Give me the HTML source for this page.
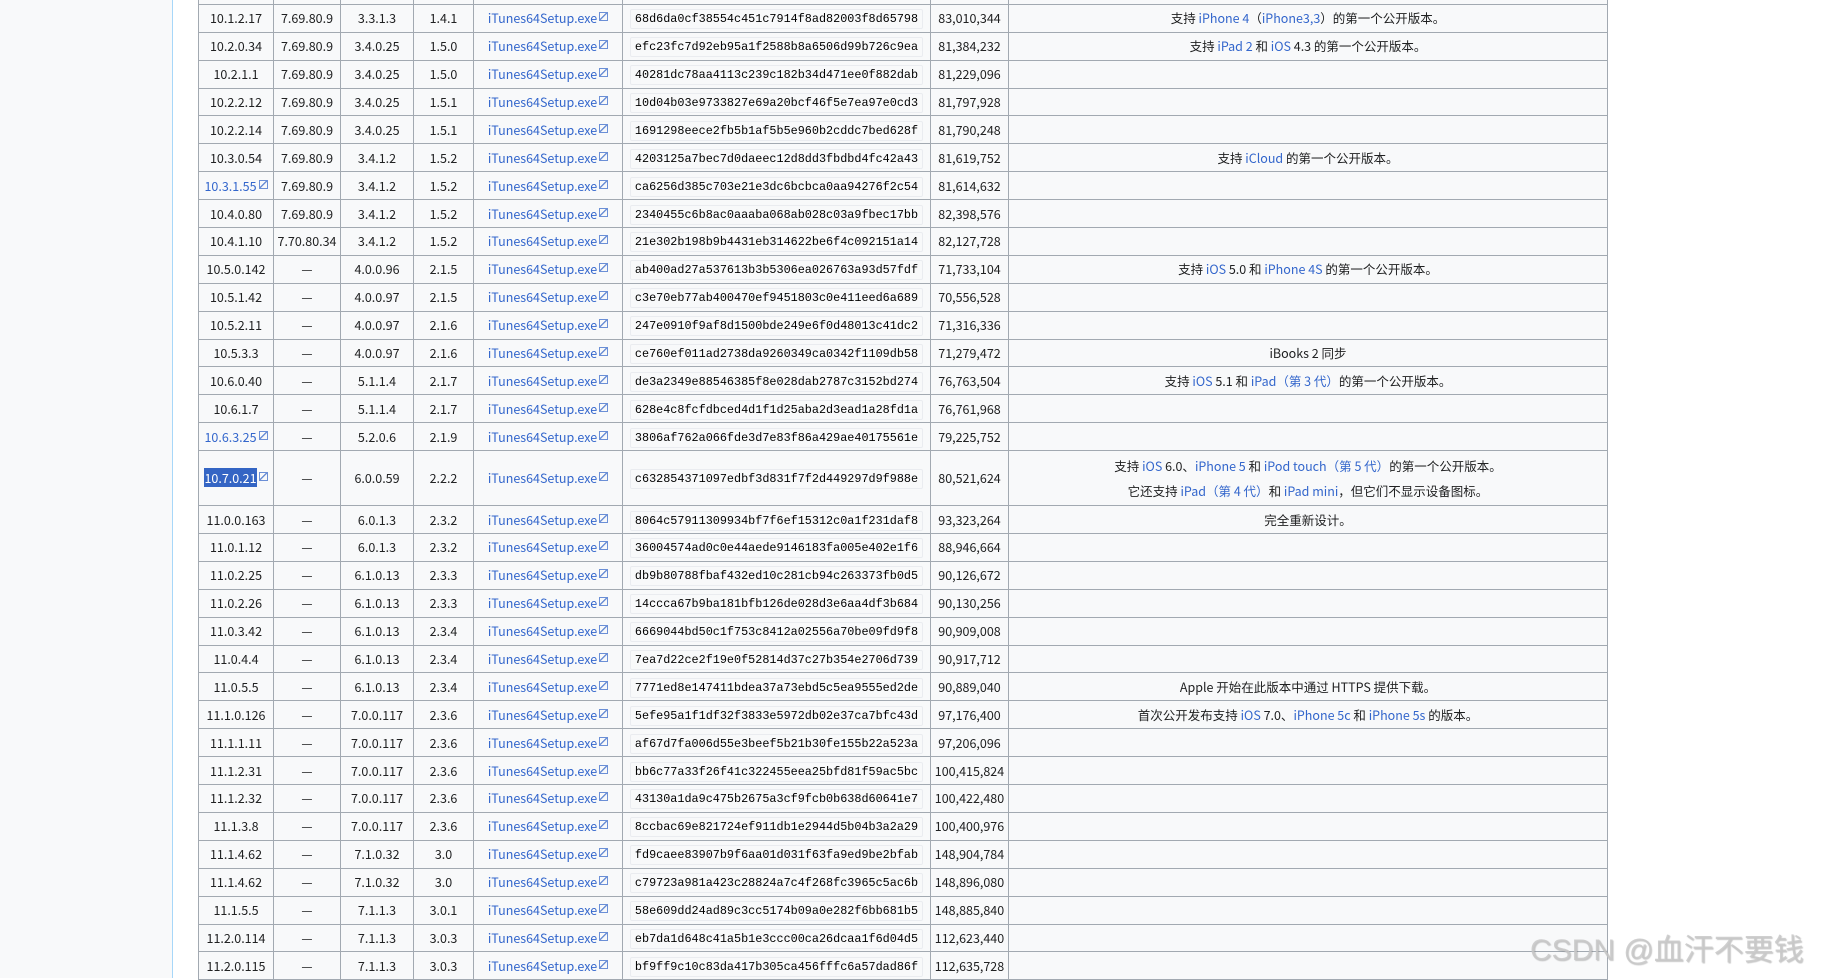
<!DOCTYPE html>
<html><head><meta charset="utf-8"><style>
html,body{margin:0;padding:0;width:1845px;height:978px;overflow:hidden;background:#fff}
#side{position:absolute;left:0;top:0;width:172px;height:978px;background:#f8f9fa;border-right:1px solid #a7d7f9}
table{position:absolute;left:198px;top:-24px;border-collapse:collapse;table-layout:fixed;width:1409px;background:#f8f9fa;font-family:"Noto Sans CJK SC","Liberation Sans",sans-serif;font-size:12.5px;color:#202122}
td{border:1px solid #a2a9b1;height:26.9px;padding:0 2px;text-align:center;white-space:nowrap;overflow:hidden;line-height:16px}
a{color:#3366cc;text-decoration:none}
.e::after{content:"";display:inline-block;width:7px;height:7px;border:1px solid #6b8fd6;margin-left:2px;vertical-align:2px;background:linear-gradient(135deg,transparent 42%,#6b8fd6 42%,#6b8fd6 56%,transparent 56%)}
code{font-family:"Liberation Mono",monospace;font-size:11.8px;background:#f8f9fa;border:1px solid #eaecf0;border-radius:2px;padding:2px 4px;color:#000}
.hl{background:#3465c4;color:#fff}
.tall td{height:54px}
.tall p{margin:0;line-height:25px}
#wm{position:absolute;left:1530px;top:925px;font-family:"Liberation Sans","Noto Sans CJK SC",sans-serif;font-size:30px;color:rgba(200,200,200,.85);text-shadow:1px 1px 1px rgba(120,120,120,.4);white-space:nowrap}
</style></head><body>
<div id="side"></div>
<table>
<colgroup><col style="width:75px"><col style="width:67px"><col style="width:73px"><col style="width:60px"><col style="width:149px"><col style="width:308px"><col style="width:78px"><col style="width:599px"></colgroup>
<tr><td></td><td></td><td></td><td></td><td></td><td></td><td></td><td></td></tr>
<tr><td>10.1.2.17</td><td>7.69.80.9</td><td>3.3.1.3</td><td>1.4.1</td><td><a class="e">iTunes64Setup.exe</a></td><td><code>68d6da0cf38554c451c7914f8ad82003f8d65798</code></td><td>83,010,344</td><td>支持 <a>iPhone 4</a>（<a>iPhone3,3</a>）的第一个公开版本。</td></tr>
<tr><td>10.2.0.34</td><td>7.69.80.9</td><td>3.4.0.25</td><td>1.5.0</td><td><a class="e">iTunes64Setup.exe</a></td><td><code>efc23fc7d92eb95a1f2588b8a6506d99b726c9ea</code></td><td>81,384,232</td><td>支持 <a>iPad 2</a> 和 <a>iOS</a> 4.3 的第一个公开版本。</td></tr>
<tr><td>10.2.1.1</td><td>7.69.80.9</td><td>3.4.0.25</td><td>1.5.0</td><td><a class="e">iTunes64Setup.exe</a></td><td><code>40281dc78aa4113c239c182b34d471ee0f882dab</code></td><td>81,229,096</td><td></td></tr>
<tr><td>10.2.2.12</td><td>7.69.80.9</td><td>3.4.0.25</td><td>1.5.1</td><td><a class="e">iTunes64Setup.exe</a></td><td><code>10d04b03e9733827e69a20bcf46f5e7ea97e0cd3</code></td><td>81,797,928</td><td></td></tr>
<tr><td>10.2.2.14</td><td>7.69.80.9</td><td>3.4.0.25</td><td>1.5.1</td><td><a class="e">iTunes64Setup.exe</a></td><td><code>1691298eece2fb5b1af5b5e960b2cddc7bed628f</code></td><td>81,790,248</td><td></td></tr>
<tr><td>10.3.0.54</td><td>7.69.80.9</td><td>3.4.1.2</td><td>1.5.2</td><td><a class="e">iTunes64Setup.exe</a></td><td><code>4203125a7bec7d0daeec12d8dd3fbdbd4fc42a43</code></td><td>81,619,752</td><td>支持 <a>iCloud</a> 的第一个公开版本。</td></tr>
<tr><td><a class="e">10.3.1.55</a></td><td>7.69.80.9</td><td>3.4.1.2</td><td>1.5.2</td><td><a class="e">iTunes64Setup.exe</a></td><td><code>ca6256d385c703e21e3dc6bcbca0aa94276f2c54</code></td><td>81,614,632</td><td></td></tr>
<tr><td>10.4.0.80</td><td>7.69.80.9</td><td>3.4.1.2</td><td>1.5.2</td><td><a class="e">iTunes64Setup.exe</a></td><td><code>2340455c6b8ac0aaaba068ab028c03a9fbec17bb</code></td><td>82,398,576</td><td></td></tr>
<tr><td>10.4.1.10</td><td>7.70.80.34</td><td>3.4.1.2</td><td>1.5.2</td><td><a class="e">iTunes64Setup.exe</a></td><td><code>21e302b198b9b4431eb314622be6f4c092151a14</code></td><td>82,127,728</td><td></td></tr>
<tr><td>10.5.0.142</td><td>—</td><td>4.0.0.96</td><td>2.1.5</td><td><a class="e">iTunes64Setup.exe</a></td><td><code>ab400ad27a537613b3b5306ea026763a93d57fdf</code></td><td>71,733,104</td><td>支持 <a>iOS</a> 5.0 和 <a>iPhone 4S</a> 的第一个公开版本。</td></tr>
<tr><td>10.5.1.42</td><td>—</td><td>4.0.0.97</td><td>2.1.5</td><td><a class="e">iTunes64Setup.exe</a></td><td><code>c3e70eb77ab400470ef9451803c0e411eed6a689</code></td><td>70,556,528</td><td></td></tr>
<tr><td>10.5.2.11</td><td>—</td><td>4.0.0.97</td><td>2.1.6</td><td><a class="e">iTunes64Setup.exe</a></td><td><code>247e0910f9af8d1500bde249e6f0d48013c41dc2</code></td><td>71,316,336</td><td></td></tr>
<tr><td>10.5.3.3</td><td>—</td><td>4.0.0.97</td><td>2.1.6</td><td><a class="e">iTunes64Setup.exe</a></td><td><code>ce760ef011ad2738da9260349ca0342f1109db58</code></td><td>71,279,472</td><td>iBooks 2 同步</td></tr>
<tr><td>10.6.0.40</td><td>—</td><td>5.1.1.4</td><td>2.1.7</td><td><a class="e">iTunes64Setup.exe</a></td><td><code>de3a2349e88546385f8e028dab2787c3152bd274</code></td><td>76,763,504</td><td>支持 <a>iOS</a> 5.1 和 <a>iPad（第 3 代）</a>的第一个公开版本。</td></tr>
<tr><td>10.6.1.7</td><td>—</td><td>5.1.1.4</td><td>2.1.7</td><td><a class="e">iTunes64Setup.exe</a></td><td><code>628e4c8fcfdbced4d1f1d25aba2d3ead1a28fd1a</code></td><td>76,761,968</td><td></td></tr>
<tr><td><a class="e">10.6.3.25</a></td><td>—</td><td>5.2.0.6</td><td>2.1.9</td><td><a class="e">iTunes64Setup.exe</a></td><td><code>3806af762a066fde3d7e83f86a429ae40175561e</code></td><td>79,225,752</td><td></td></tr>
<tr class="tall"><td><a class="e"><span class="hl">10.7.0.21</span></a></td><td>—</td><td>6.0.0.59</td><td>2.2.2</td><td><a class="e">iTunes64Setup.exe</a></td><td><code>c632854371097edbf3d831f7f2d449297d9f988e</code></td><td>80,521,624</td><td><p>支持 <a>iOS</a> 6.0、<a>iPhone 5</a> 和 <a>iPod touch（第 5 代）</a>的第一个公开版本。</p><p>它还支持 <a>iPad（第 4 代）</a>和 <a>iPad mini</a>，但它们不显示设备图标。</p></td></tr>
<tr><td>11.0.0.163</td><td>—</td><td>6.0.1.3</td><td>2.3.2</td><td><a class="e">iTunes64Setup.exe</a></td><td><code>8064c57911309934bf7f6ef15312c0a1f231daf8</code></td><td>93,323,264</td><td>完全重新设计。</td></tr>
<tr><td>11.0.1.12</td><td>—</td><td>6.0.1.3</td><td>2.3.2</td><td><a class="e">iTunes64Setup.exe</a></td><td><code>36004574ad0c0e44aede9146183fa005e402e1f6</code></td><td>88,946,664</td><td></td></tr>
<tr><td>11.0.2.25</td><td>—</td><td>6.1.0.13</td><td>2.3.3</td><td><a class="e">iTunes64Setup.exe</a></td><td><code>db9b80788fbaf432ed10c281cb94c263373fb0d5</code></td><td>90,126,672</td><td></td></tr>
<tr><td>11.0.2.26</td><td>—</td><td>6.1.0.13</td><td>2.3.3</td><td><a class="e">iTunes64Setup.exe</a></td><td><code>14ccca67b9ba181bfb126de028d3e6aa4df3b684</code></td><td>90,130,256</td><td></td></tr>
<tr><td>11.0.3.42</td><td>—</td><td>6.1.0.13</td><td>2.3.4</td><td><a class="e">iTunes64Setup.exe</a></td><td><code>6669044bd50c1f753c8412a02556a70be09fd9f8</code></td><td>90,909,008</td><td></td></tr>
<tr><td>11.0.4.4</td><td>—</td><td>6.1.0.13</td><td>2.3.4</td><td><a class="e">iTunes64Setup.exe</a></td><td><code>7ea7d22ce2f19e0f52814d37c27b354e2706d739</code></td><td>90,917,712</td><td></td></tr>
<tr><td>11.0.5.5</td><td>—</td><td>6.1.0.13</td><td>2.3.4</td><td><a class="e">iTunes64Setup.exe</a></td><td><code>7771ed8e147411bdea37a73ebd5c5ea9555ed2de</code></td><td>90,889,040</td><td>Apple 开始在此版本中通过 HTTPS 提供下载。</td></tr>
<tr><td>11.1.0.126</td><td>—</td><td>7.0.0.117</td><td>2.3.6</td><td><a class="e">iTunes64Setup.exe</a></td><td><code>5efe95a1f1df32f3833e5972db02e37ca7bfc43d</code></td><td>97,176,400</td><td>首次公开发布支持 <a>iOS</a> 7.0、<a>iPhone 5c</a> 和 <a>iPhone 5s</a> 的版本。</td></tr>
<tr><td>11.1.1.11</td><td>—</td><td>7.0.0.117</td><td>2.3.6</td><td><a class="e">iTunes64Setup.exe</a></td><td><code>af67d7fa006d55e3beef5b21b30fe155b22a523a</code></td><td>97,206,096</td><td></td></tr>
<tr><td>11.1.2.31</td><td>—</td><td>7.0.0.117</td><td>2.3.6</td><td><a class="e">iTunes64Setup.exe</a></td><td><code>bb6c77a33f26f41c322455eea25bfd81f59ac5bc</code></td><td>100,415,824</td><td></td></tr>
<tr><td>11.1.2.32</td><td>—</td><td>7.0.0.117</td><td>2.3.6</td><td><a class="e">iTunes64Setup.exe</a></td><td><code>43130a1da9c475b2675a3cf9fcb0b638d60641e7</code></td><td>100,422,480</td><td></td></tr>
<tr><td>11.1.3.8</td><td>—</td><td>7.0.0.117</td><td>2.3.6</td><td><a class="e">iTunes64Setup.exe</a></td><td><code>8ccbac69e821724ef911db1e2944d5b04b3a2a29</code></td><td>100,400,976</td><td></td></tr>
<tr><td>11.1.4.62</td><td>—</td><td>7.1.0.32</td><td>3.0</td><td><a class="e">iTunes64Setup.exe</a></td><td><code>fd9caee83907b9f6aa01d031f63fa9ed9be2bfab</code></td><td>148,904,784</td><td></td></tr>
<tr><td>11.1.4.62</td><td>—</td><td>7.1.0.32</td><td>3.0</td><td><a class="e">iTunes64Setup.exe</a></td><td><code>c79723a981a423c28824a7c4f268fc3965c5ac6b</code></td><td>148,896,080</td><td></td></tr>
<tr><td>11.1.5.5</td><td>—</td><td>7.1.1.3</td><td>3.0.1</td><td><a class="e">iTunes64Setup.exe</a></td><td><code>58e609dd24ad89c3cc5174b09a0e282f6bb681b5</code></td><td>148,885,840</td><td></td></tr>
<tr><td>11.2.0.114</td><td>—</td><td>7.1.1.3</td><td>3.0.3</td><td><a class="e">iTunes64Setup.exe</a></td><td><code>eb7da1d648c41a5b1e3ccc00ca26dcaa1f6d04d5</code></td><td>112,623,440</td><td></td></tr>
<tr><td>11.2.0.115</td><td>—</td><td>7.1.1.3</td><td>3.0.3</td><td><a class="e">iTunes64Setup.exe</a></td><td><code>bf9ff9c10c83da417b305ca456fffc6a57dad86f</code></td><td>112,635,728</td><td></td></tr>
</table>
<div id="wm">CSDN @血汗不要钱</div>
</body></html>
